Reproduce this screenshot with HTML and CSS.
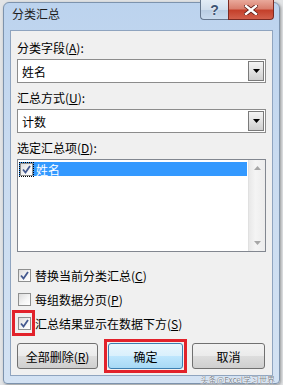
FILE: index.html
```html
<!DOCTYPE html>
<html lang="zh-CN">
<head>
    <meta charset="UTF-8">
    <meta name="viewport" content="width=device-width, initial-scale=1.0">
    <title>分类汇总</title>
    <link rel="stylesheet" href="styles.css">
</head>
<body>
    <div class="window">
        <div class="titlebar">
            <span class="title">分类汇总</span>
            <div class="caption-buttons">
                <button class="cap help">?</button>
                <button class="cap close">
                    <svg width="14" height="10" viewBox="0 0 14 10">
                        <path d="M2 1 L12 9 M12 1 L2 9" stroke="#5a1a14" stroke-width="4" stroke-linecap="square"/>
                        <path d="M2 1 L12 9 M12 1 L2 9" stroke="#ffffff" stroke-width="2.4" stroke-linecap="square"/>
                    </svg>
                </button>
            </div>
        </div>

        <div class="client">
            <div class="label">分类字段(<u>A</u>):</div>
            <div class="combo">
                <span class="combo-text">姓名</span>
                <span class="combo-btn">
                    <svg width="7" height="4" viewBox="0 0 7 4"><path d="M0 0 H7 L3.5 4 Z" fill="#000"/></svg>
                </span>
            </div>

            <div class="label second">汇总方式(<u>U</u>):</div>
            <div class="combo">
                <span class="combo-text">计数</span>
                <span class="combo-btn">
                    <svg width="7" height="4" viewBox="0 0 7 4"><path d="M0 0 H7 L3.5 4 Z" fill="#000"/></svg>
                </span>
            </div>

            <div class="label second">选定汇总项(<u>D</u>):</div>
            <div class="listbox">
                <div class="list-items">
                    <div class="list-item selected">
                        <span class="focus"><span class="check checked"><svg width="11" height="11" viewBox="0 0 11 11"><path d="M2 5.5 L4.5 8.5 L9 2" fill="none" stroke="#44598f" stroke-width="1.8"/></svg></span></span>
                        <span>姓名</span>
                    </div>
                </div>
                <div class="scrollbar">
                    <svg width="7" height="4" viewBox="0 0 7 4"><path d="M0 4 H7 L3.5 0 Z" fill="#a6a6a6"/></svg>
                    <svg width="7" height="4" viewBox="0 0 7 4"><path d="M0 0 H7 L3.5 4 Z" fill="#a6a6a6"/></svg>
                </div>
            </div>

            <div class="options">
                <div class="option">
                    <span class="check checked"><svg width="11" height="11" viewBox="0 0 11 11"><path d="M2 5.5 L4.5 8.5 L9 2" fill="none" stroke="#44598f" stroke-width="1.8"/></svg></span>
                    <span>替换当前分类汇总(<u>C</u>)</span>
                </div>
                <div class="option">
                    <span class="check"></span>
                    <span>每组数据分页(<u>P</u>)</span>
                </div>
                <div class="option">
                    <span class="check checked marked"><svg width="11" height="11" viewBox="0 0 11 11"><path d="M2 5.5 L4.5 8.5 L9 2" fill="none" stroke="#44598f" stroke-width="1.8"/></svg></span>
                    <span>汇总结果显示在数据下方(<u>S</u>)</span>
                </div>
            </div>

            <div class="buttons">
                <button class="btn remove">全部删除(<u>R</u>)</button>
                <button class="btn ok">确定</button>
                <button class="btn cancel">取消</button>
            </div>
        </div>

        <div class="watermark">头条@Excel学习世界</div>
    </div>
</body>
</html>
```

FILE: styles.css
```css
body {
    margin: 0;
    width: 283px;
    height: 385px;
    overflow: hidden;
    background-color: #e2e4e6;
    font-family: "Noto Sans CJK SC", "Liberation Sans", sans-serif;
    font-size: 12px;
    color: #000;
}
.window {
    position: relative;
    box-sizing: border-box;
    width: 277px;
    margin: 2px 0 0 3px;
    padding: 0 6px 7px 6px;
    border: 1px solid #7d93ad;
    border-radius: 6px 6px 4px 4px;
    background: linear-gradient(to bottom, #bcd3ee 0%, #c9dbf0 40%, #d3e2f3 100%);
    box-shadow: 1px 1px 3px rgba(0,0,0,0.35);
}
.titlebar {
    display: flex;
    align-items: flex-start;
    height: 27px;
}
.title {
    line-height: 22px;
    padding-left: 2px;
    color: #1e1e1e;
}
.caption-buttons {
    display: flex;
    margin: -3px -1px 0 auto;
}
.cap {
    height: 20px;
    padding: 0;
    border: 1px solid #66778e;
    border-top: none;
    display: flex;
    align-items: center;
    justify-content: center;
    font-family: "Liberation Sans", sans-serif;
}
.help {
    width: 28px;
    border-radius: 0 0 0 4px;
    border-right: none;
    background: linear-gradient(to bottom, #e3ecf6 0%, #d1deed 50%, #b9cce2 51%, #c9daee 100%);
    color: #3e5574;
    font-size: 14px;
    font-weight: bold;
    text-shadow: 0 0 2px #fff;
}
.close {
    width: 46px;
    border-radius: 0 0 4px 0;
    border-color: #7b2a22;
    background: linear-gradient(to bottom, #e9a99b 0%, #d9806f 45%, #c4402b 55%, #d2604c 100%);
}
.client {
    box-sizing: border-box;
    width: 263px;
    padding: 8px 6px 6px 6px;
    border: 1px solid #8fa4bf;
    background-color: #f0f0f0;
}
.label {
    line-height: 18px;
    margin-bottom: 2px;
}
.label.second {
    margin-top: 6px;
}
.combo {
    box-sizing: border-box;
    display: flex;
    align-items: center;
    height: 24px;
    padding: 1px;
    border: 1px solid #8c8c8c;
    background-color: #fff;
}
.combo-text {
    flex: 1;
    padding-left: 3px;
}
.combo-btn {
    box-sizing: border-box;
    width: 16px;
    height: 20px;
    display: flex;
    align-items: center;
    justify-content: center;
    border: 1px solid #7a7a7a;
    background: linear-gradient(to bottom, #f4f4f4 0%, #e2e2e2 50%, #cfcfcf 100%);
}
.listbox {
    box-sizing: border-box;
    display: flex;
    height: 93px;
    border: 1px solid #828790;
    background-color: #fff;
}
.list-items {
    flex: 1;
    padding: 2px 1px;
}
.list-item {
    display: flex;
    align-items: center;
    gap: 3px;
    height: 14px;
}
.list-item.selected {
    background-color: #3399ff;
    color: #fff;
}
.focus {
    display: flex;
    margin-left: 1px;
    outline: 1px dotted #000;
    outline-offset: 0;
}
.scrollbar {
    box-sizing: border-box;
    width: 17px;
    display: flex;
    flex-direction: column;
    align-items: center;
    justify-content: space-between;
    padding: 6px 0 6px 0;
    background: linear-gradient(to right, #e8e8e8, #f4f4f4 40%, #ececec);
    border-left: 1px solid #e0e0e0;
}
.check {
    position: relative;
    box-sizing: border-box;
    width: 13px;
    height: 13px;
    display: inline-flex;
    align-items: center;
    justify-content: center;
    border: 1px solid #8e8f8f;
    background: linear-gradient(135deg, #dcdcdc 0%, #f6f6f6 60%, #ffffff 100%);
    flex: none;
}
.check svg {
    display: block;
}
.check.marked::after {
    content: "";
    position: absolute;
    left: -7px;
    top: -8px;
    width: 23px;
    height: 26px;
    box-sizing: border-box;
    border: 3px solid #e2222b;
}
.options {
    display: flex;
    flex-direction: column;
    gap: 6px;
    margin-top: 14px;
}
.option {
    display: flex;
    align-items: center;
    gap: 4px;
    height: 18px;
    padding-left: 1px;
}
.buttons {
    display: flex;
    gap: 10px;
    margin-top: 11px;
}
.btn {
    position: relative;
    box-sizing: border-box;
    height: 26px;
    padding: 0;
    border: 1px solid #707070;
    border-radius: 3px;
    background: linear-gradient(to bottom, #f2f2f2 0%, #ebebeb 50%, #dddddd 51%, #cfcfcf 100%);
    font-family: "Noto Sans CJK SC", "Liberation Sans", sans-serif;
    font-size: 12px;
    color: #000;
}
.remove {
    width: 81px;
}
.ok {
    width: 75px;
    border-color: #3c7fb1;
    background: linear-gradient(to bottom, #eaf6fd 0%, #d9f0fc 50%, #bee6fd 51%, #a7d9f5 100%);
}
.ok::after {
    content: "";
    position: absolute;
    left: -5px;
    top: -5px;
    right: -5px;
    bottom: -5px;
    border: 3px solid #e2222b;
}
.cancel {
    width: 73px;
    margin-left: -1px;
}
.watermark {
    position: absolute;
    right: 4px;
    bottom: -2px;
    font-size: 8px;
    line-height: 10px;
    color: #7f868e;
    text-shadow: 0 0 1px #fff, 0 0 1px #fff;
}
```
